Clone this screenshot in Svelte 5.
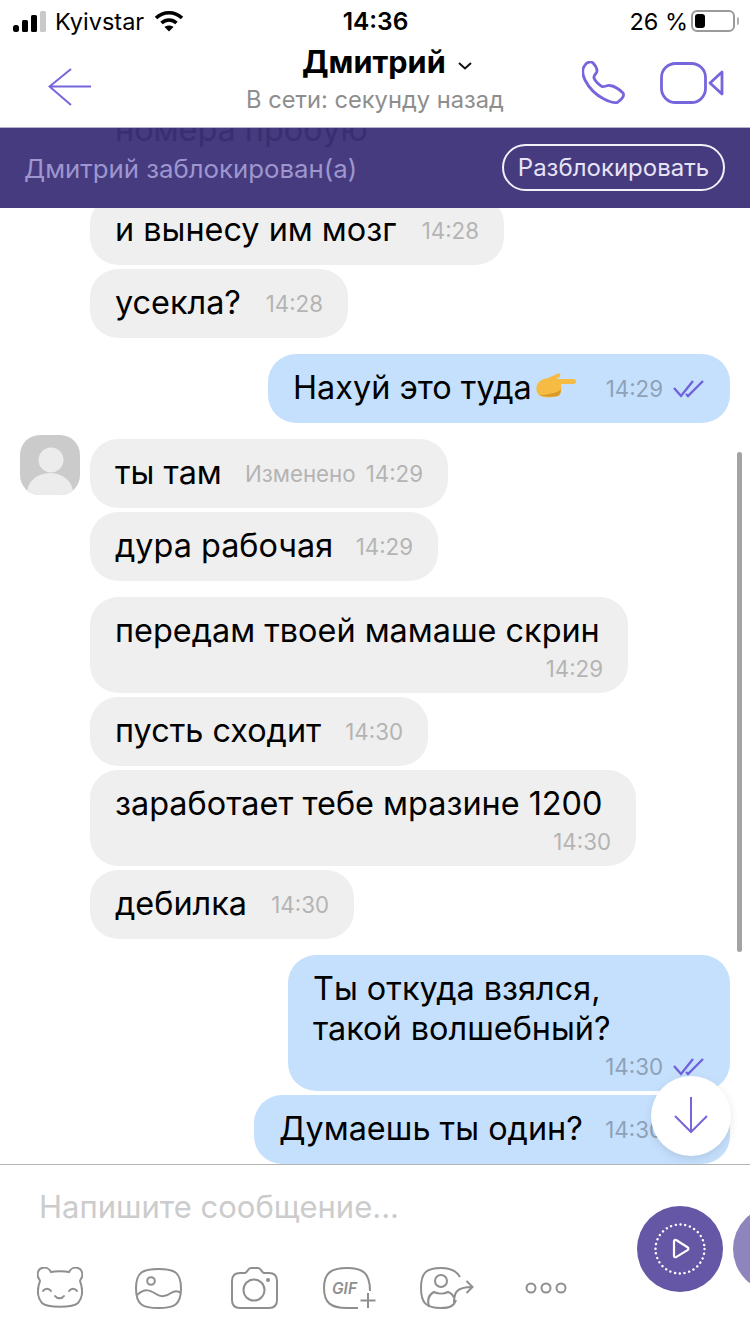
<script>
  const messages = [
    { text: 'номера пробую', time: '', long: true, w: 414 },
    { text: 'и вынесу им мозг', time: '14:28', w: 414 },
    { text: 'усекла?', time: '14:28', w: 258 },
    { text: 'Нахуй это туда', time: '14:29', out: true, emoji: true, read: true, w: 462, gap: true },
    { text: 'ты там', time: '14:29', edited: true, avatar: true, w: 358, gap: true },
    { text: 'дура рабочая', time: '14:29', w: 348 },
    { text: 'передам твоей мамаше скрин', time: '14:29', long: true, w: 538, gap: true },
    { text: 'пусть сходит', time: '14:30', w: 338 },
    { text: 'заработает тебе мразине 1200', time: '14:30', long: true, w: 546 },
    { text: 'дебилка', time: '14:30', w: 264 },
    { text: 'Ты откуда взялся,\nтакой волшебный?', time: '14:30', out: true, long: true, read: true, w: 442, gap: true },
    { text: 'Думаешь ты один?', time: '14:30', out: true, read: true, w: 476 }
  ];
</script>

{#snippet ticks()}
  <svg class="ticks" viewBox="0 0 32 18" width="32" height="18" fill="none" stroke="#6f62dc" stroke-width="2.400">
    <path d="M1 8l7 8L20 1" />
    <path d="M13 14l2 2L30 1" />
  </svg>
{/snippet}

<div class="screen">
  <header class="top">
    <div class="status">
      <div class="left">
        <svg width="34" height="21" viewBox="0 0 34 21">
          <rect x="0" y="14" width="6" height="7" rx="2.500" fill="#000" />
          <rect x="9" y="9" width="6" height="12" rx="1.500" fill="#000" />
          <rect x="18" y="4" width="6" height="17" rx="1.500" fill="#000" />
          <rect x="27" y="0" width="6" height="21" rx="1.500" fill="#c9c9c9" />
        </svg>
        <span>Kyivstar</span>
        <svg class="wifi" width="30" height="22" viewBox="0 0 30 22" fill="none" stroke="#000" stroke-width="3.600">
          <path d="M2 8c7.500-7 18.500-7 26 0" />
          <path d="M7.500 13c4.500-4 10.500-4 15 0" />
          <path d="M15 21.500l-4.500-4.500c2.500-2 6.500-2 9 0z" fill="#000" stroke="none" />
        </svg>
      </div>
      <b class="clock">14:36</b>
      <div class="right">
        <span>26 %</span>
        <div class="battery"><i></i></div>
      </div>
    </div>
    <div class="nav">
      <svg class="back" width="44" height="38" viewBox="0 0 44 38" fill="none" stroke="#7566dc" stroke-width="2">
        <path d="M43 18.500H2M23 1L1.500 18.500 23 37" />
      </svg>
      <div class="title">
        <h1>Дмитрий
          <svg width="14" height="8" viewBox="0 0 14 8" fill="none" stroke="#111" stroke-width="2"><path d="M1 1l6 5.500L13 1" /></svg>
        </h1>
        <p>В сети: секунду назад</p>
      </div>
      <div class="actions">
        <svg width="44" height="44" viewBox="0 0 44 44" fill="none" stroke="#7566dc" stroke-width="2.800" stroke-linejoin="round">
          <path d="M3 4C5 1 9 0 11 2c2 2 4 6 4 8 0 3-4 4-3 7 1 3 5 7 8 8.500 3 .5 5-1.500 8-1 4 .5 10 4.500 13 7.500 2 3-1 6-5 9-3 2-8 0-14-3C14 34 7 27 3 19 0 13 0 8 3 4z" />
        </svg>
        <svg width="64" height="42" viewBox="0 0 64 42" fill="none" stroke="#7566dc" stroke-width="2.800" stroke-linejoin="round">
          <rect x="1.500" y="1.500" width="44" height="39" rx="14" />
          <path d="M62 10v22L50 21z" />
        </svg>
      </div>
    </div>
  </header>

  <main class="chat">
    <div class="list">
      {#each messages as m}
        <div class="row" class:out={m.out} class:gap={m.gap}>
          {#if m.avatar}
            <div class="avatar">
              <svg viewBox="0 0 60 60" width="60" height="60">
                <circle cx="31" cy="25" r="12.500" fill="#ececec" />
                <ellipse cx="30" cy="58" rx="23" ry="20" fill="#ececec" />
              </svg>
            </div>
          {/if}
          <div class="bubble" class:long={m.long} style="width: {m.w}px">
            <span class="text">{m.text}{#if m.emoji}<svg class="emoji" width="42" height="26" viewBox="0 0 42 26">
              <path d="M1 12c2-5 7-6 11-7L22 .500c3-.5 3 2.500 1 4L20 6h17c4 0 4 5 0 5H25c1 4 0 11-3 12-6 2-16 2-19-1-3-3-3-7-2-10z" fill="#f6bb42" />
              <path d="M3 22c5 2 14 2 19 1 2-1 3-4 3-7-3 4-15 6-22 6z" fill="#d99a2a" />
            </svg>{/if}</span>
            <span class="meta">
              {#if m.edited}<span>Изменено</span>{/if}
              <span>{m.time}</span>
              {#if m.read}{@render ticks()}{/if}
            </span>
          </div>
        </div>
      {/each}
    </div>

    <div class="banner">
      <span>Дмитрий заблокирован(а)</span>
      <button>Разблокировать</button>
    </div>
    <div class="scrollbar"></div>
    <button class="down" aria-label="Вниз">
      <svg width="34" height="38" viewBox="0 0 34 38" fill="none" stroke="#7566dc" stroke-width="2">
        <path d="M17 1v35M1 20l16 16 16-16" />
      </svg>
    </button>
  </main>

  <footer class="composer">
    <div class="input">
      <div class="placeholder">Напишите сообщение...</div>
      <div class="tools">
        <svg width="46" height="42" viewBox="0 0 46 42" fill="none" stroke="#8f8f8f" stroke-width="2">
          <path d="M14 5c4-1 14-1 18 0 2-4 6-5 9-4 4 1 5 6 4 9-1 2-2 3-2 4 3 8 3 16-2 22-5 5-31 5-36 0-5-6-5-14-2-22 0-1-1-2-2-4C0 7 1 2 5 1c3-1 7 0 9 4z" />
          <path d="M6 24c2-3 6-3 8 0M32 24c2-3 6-3 8 0M18 29c2 3 7 3 9 0" stroke-linecap="round" />
        </svg>
        <svg width="47" height="41" viewBox="0 0 47 41" fill="none" stroke="#8f8f8f" stroke-width="2">
          <path d="M23.500 1C39 1 46 4 46 20.500S39 40 23.500 40 1 37 1 20.500 8 1 23.500 1z" />
          <circle cx="16" cy="13" r="3.800" />
          <path d="M2 27c8-7 13-5 19-1s11 2 15-1c3-2 6-3 10 0" />
        </svg>
        <svg width="47" height="42" viewBox="0 0 47 42" fill="none" stroke="#8f8f8f" stroke-width="2">
          <path d="M1 14c0-5 3-8 8-8h5c2 0 3-5 6-5h7c3 0 4 5 6 5h5c5 0 8 3 8 8v19c0 5-3 8-8 8H9c-5 0-8-3-8-8z" />
          <circle cx="23" cy="23" r="10.500" />
          <circle cx="37" cy="13" r="2" fill="#8f8f8f" stroke="none" />
        </svg>
        <svg width="53" height="42" viewBox="0 0 53 42" fill="none" stroke="#8f8f8f" stroke-width="2">
          <path d="M47 24C47 6 40 1 24 1 8 1 1 6 1 21s7 20 23 20h11" />
          <path d="M45 26v15M37.500 33.500h15" />
          <text x="9" y="27" font-family="Inter, sans-serif" font-style="italic" font-weight="600" font-size="15.500" fill="#8f8f8f" stroke="none">GIF</text>
        </svg>
        <svg width="54" height="42" viewBox="0 0 54 42" fill="none" stroke="#8f8f8f" stroke-width="2">
          <path d="M40 10C36 3 30 1 21 1 6 1 1 6 1 21s5 20 20 20c9 0 13-2 15-8" />
          <circle cx="21" cy="14" r="6" />
          <path d="M9 40C7 33 8 28 14 25c4 2 10 2 14 0 3 1 5 3 6 6" />
          <path d="M34 36c0-10 2-16 18-16M46.500 14l6 6-6 6" />
        </svg>
        <svg width="42" height="12" viewBox="0 0 42 12" fill="none" stroke="#8f8f8f" stroke-width="2">
          <circle cx="6" cy="6" r="4.500" />
          <circle cx="21" cy="6" r="4.500" />
          <circle cx="36" cy="6" r="4.500" />
        </svg>
      </div>
    </div>
    <div class="circles">
      <div class="circle">
        <svg width="54" height="54" viewBox="0 0 54 54" fill="none" stroke="#fff">
          <circle cx="27" cy="27" r="24.500" stroke-width="2.400" stroke-dasharray="0.100 4.700" stroke-linecap="round" />
          <path d="M21 19.500c0-1.500 1-2 2.500-1.200l11 7c1.200.8 1.200 2 0 2.800l-11 6.800c-1.500.8-2.500.2-2.500-1.200z" stroke-width="2.200" />
        </svg>
      </div>
      <div class="circle pale"></div>
    </div>
  </footer>
</div>

<style>
  :global(body) {
    margin: 0;
    background: #fff;
  }
  .screen {
    width: 750px;
    height: 1334px;
    display: flex;
    flex-direction: column;
    overflow: hidden;
    font-family: Inter, "Noto Sans", sans-serif;
    color: #000;
  }
  .top {
    height: 128px;
    box-sizing: border-box;
    border-bottom: 1px solid #b5b0cf;
    flex: none;
  }
  .status {
    height: 42px;
    display: grid;
    grid-template-columns: 1fr auto 1fr;
    align-items: center;
    padding: 0 12px 0 13px;
    font-size: 23.500px;
  }
  .left {
    display: flex;
    align-items: center;
    gap: 8px;
  }
  .wifi {
    margin-left: 2px;
  }
  .clock {
    font-size: 24.500px;
    font-weight: 600;
  }
  .right {
    display: flex;
    align-items: center;
    justify-content: flex-end;
    gap: 3px;
  }
  .battery {
    position: relative;
    width: 36px;
    height: 14px;
    border: 2px solid #9a9a9a;
    border-radius: 6px;
    padding: 2px;
    margin-right: 3px;
  }
  .battery::after {
    content: "";
    position: absolute;
    right: -6px;
    top: 5px;
    width: 2px;
    height: 8px;
    border-radius: 0 2px 2px 0;
    background: #b0b0b0;
  }
  .battery i {
    display: block;
    width: 10px;
    height: 100%;
    background: #000;
    border-radius: 3px;
  }
  .nav {
    height: 85px;
    display: grid;
    grid-template-columns: 1fr auto 1fr;
    align-items: center;
    padding: 0 26px;
  }
  .back {
    margin: 5px 0 0 22px;
  }
  .title {
    text-align: center;
    align-self: start;
  }
  h1 {
    margin: 0;
    font-size: 30.600px;
    line-height: 40px;
    font-weight: 700;
    padding-left: 24px;
  }
  h1 svg {
    margin-left: 5px;
    vertical-align: 3px;
  }
  .title p {
    margin: 3px 0 0;
    font-size: 23.700px;
    line-height: 30px;
    color: #8e8e8e;
  }
  .actions {
    display: flex;
    justify-content: flex-end;
    align-items: center;
    gap: 34px;
    margin-bottom: 4px;
  }
  .chat {
    position: relative;
    flex: 1;
    min-height: 0;
    overflow: hidden;
    display: flex;
    flex-direction: column;
    justify-content: flex-end;
  }
  .list {
    display: flex;
    flex-direction: column;
    gap: 4px;
    padding: 0 20px 0 90px;
    flex: none;
  }
  .row {
    position: relative;
    display: flex;
  }
  .row.out {
    justify-content: flex-end;
  }
  .row.gap {
    margin-top: 12px;
  }
  .avatar {
    position: absolute;
    left: -70px;
    top: -4px;
    width: 60px;
    height: 60px;
    background: #cbcbcb;
    border-radius: 20px;
    overflow: hidden;
  }
  .bubble {
    box-sizing: border-box;
    min-height: 69px;
    padding: 12px 25px 14px;
    border-radius: 28px;
    background: #efefef;
    display: flex;
    align-items: center;
    justify-content: space-between;
  }
  .out .bubble {
    background: #c5e0fd;
  }
  .bubble.long {
    display: block;
    padding: 14px 25px 10px;
  }
  .text {
    font-size: 32.400px;
    line-height: 42px;
    white-space: pre;
    display: inline-flex;
    align-items: center;
  }
  .long .text {
    display: block;
    line-height: 40px;
  }
  .emoji {
    margin: -3px 0 0 4px;
  }
  .meta {
    font-size: 22.300px;
    line-height: 28px;
    min-height: 28px;
    color: #b4b4b4;
    display: flex;
    align-items: center;
    justify-content: flex-end;
    gap: 10px;
    margin-top: 3px;
  }
  .out .meta {
    color: #8ea1b8;
  }
  .long .meta {
    margin-top: 4px;
  }
  .banner {
    position: absolute;
    top: 0;
    left: 0;
    right: 0;
    height: 80px;
    display: flex;
    align-items: center;
    justify-content: space-between;
    padding: 0 25px 0 24px;
    box-sizing: border-box;
    background: rgba(60, 48, 119, 0.95);
    color: #9d96cf;
    font-size: 25.800px;
  }
  .banner button {
    width: 223px;
    height: 47px;
    margin-top: -1px;
    border: 2px solid #f2f0fa;
    border-radius: 24px;
    background: transparent;
    color: #e6e3f6;
    font: inherit;
    font-size: 24px;
    padding: 0;
  }
  .scrollbar {
    position: absolute;
    left: 737px;
    top: 324px;
    width: 5px;
    height: 500px;
    border-radius: 3px;
    background: #a3a3a3;
  }
  .down {
    position: absolute;
    left: 651px;
    top: 948px;
    width: 80px;
    height: 80px;
    padding: 0 0 2px;
    border: 0;
    border-radius: 50%;
    background: #fff;
    box-shadow: 0 3px 10px rgba(0, 0, 0, 0.1);
    display: flex;
    align-items: center;
    justify-content: center;
  }
  .composer {
    flex: none;
    height: 170px;
    box-sizing: border-box;
    border-top: 1px solid #b4b4b4;
    background: #fff;
    display: flex;
    overflow: hidden;
  }
  .input {
    width: 637px;
    flex: none;
  }
  .placeholder {
    padding: 22px 0 0 39px;
    font-size: 31px;
    line-height: 40px;
    color: #cccccc;
  }
  .tools {
    display: grid;
    grid-template-columns: 98px 96px 92px 97px 105px 42px;
    align-items: center;
    padding: 40px 0 0 37px;
    height: 42px;
  }
  .circles {
    display: flex;
    gap: 10px;
    padding-top: 41px;
  }
  .circle {
    width: 86px;
    height: 86px;
    flex: none;
    border-radius: 50%;
    background: #6557a6;
    display: flex;
    align-items: center;
    justify-content: center;
  }
  .pale {
    background: #8f85bd;
  }
</style>
